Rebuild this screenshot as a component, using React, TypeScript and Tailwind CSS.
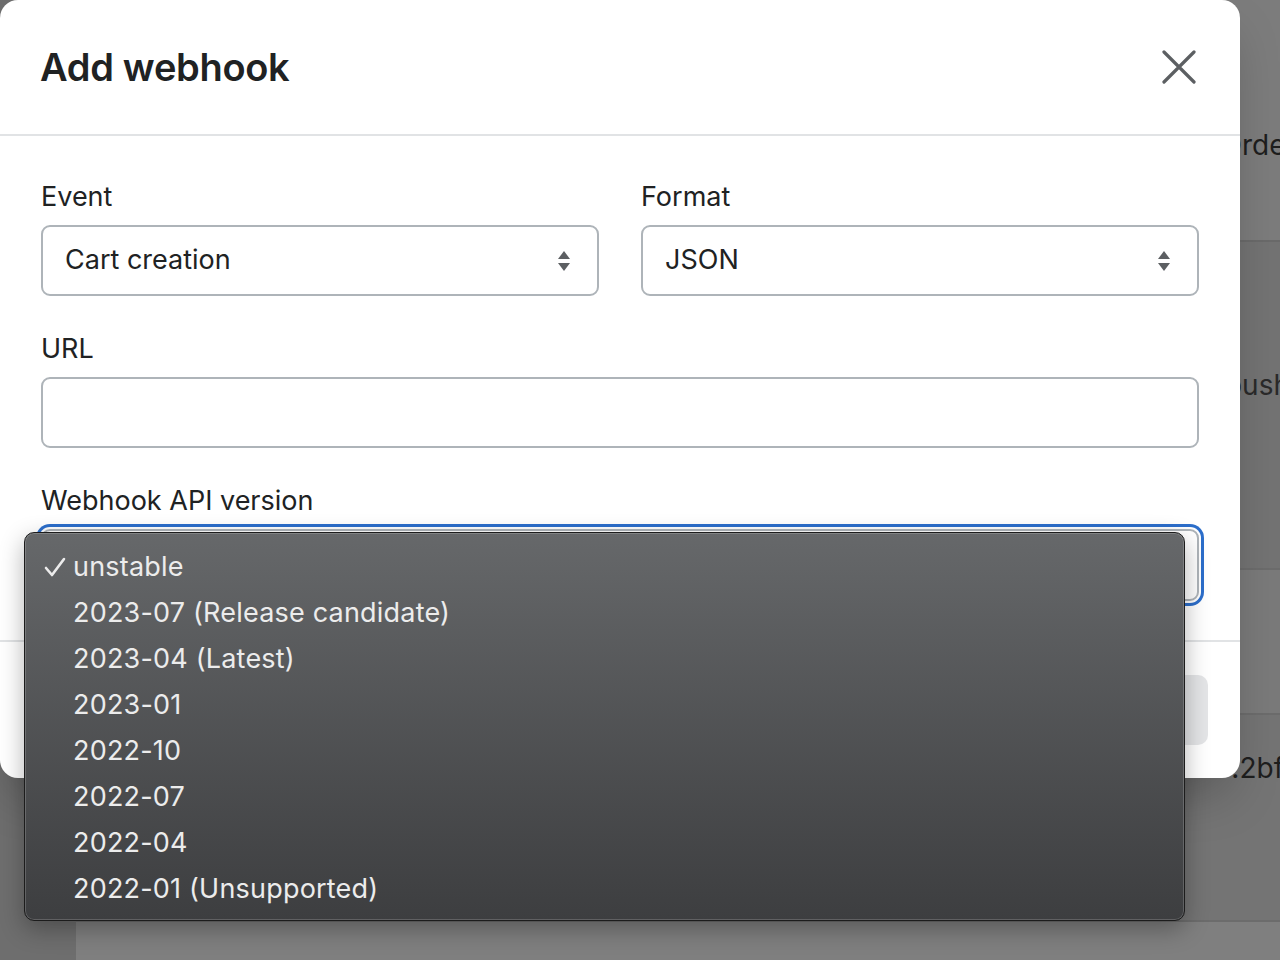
const versions = [
  'unstable',
  '2023-07 (Release candidate)',
  '2023-04 (Latest)',
  '2023-01',
  '2022-10',
  '2022-07',
  '2022-04',
  '2022-01 (Unsupported)',
];

function SelectArrows() {
  return (
    <svg width="14" height="22" viewBox="0 0 14 22" fill="#5c5f62">
      <path d="M7 1 L13 9 H1 Z" />
      <path d="M7 21 L13 13 H1 Z" />
    </svg>
  );
}

function Field({ label, value, arrows, focused }: { label: string; value?: string; arrows?: boolean; focused?: boolean }) {
  return (
    <div className="flex flex-col">
      <label className="text-[27px] leading-[36px] text-[#202223]">{label}</label>
      <div
        className={`flex items-center justify-between rounded-[9px] border-2 border-[#aeb4b9] bg-white pl-[22px] pr-[26px] ${
          focused ? 'mt-[10px] h-[72px] ring-[3px] ring-[#2c6ecb] ring-offset-2' : 'mt-[10px] h-[71px]'
        }`}
      >
        <span className="text-[27px] text-[#202223]">{value}</span>
        {arrows && <SelectArrows />}
      </div>
    </div>
  );
}

export default function App() {
  return (
    <div className="relative h-[960px] w-[1280px] overflow-hidden bg-[#787878]" style={{ fontFamily: 'Inter, "Noto Sans", sans-serif' }}>
      {/* page underneath the overlay */}
      <div className="flex h-full">
        <div className="w-[76px] bg-[#6e6e6e]"></div>
        <div className="flex flex-1 flex-col">
          <div className="flex h-[242px] items-start justify-end border-b-2 border-[#6a6a6a] bg-[#7c7c7c] pt-[124px]">
            <span className="-mr-[16px] text-[28px] text-[#1e1e1e]">Order</span>
          </div>
          <div className="flex h-[326px] items-start justify-end bg-[#737373] pt-[122px]">
            <span className="-mr-[10px] text-[28px] text-[#2a2a2a]">push</span>
          </div>
          <div className="h-[147px] border-y-2 border-[#6c6c6c] bg-[#7a7a7a]"></div>
          <div className="flex h-[205px] items-start justify-end bg-[#747474] pt-[32px]">
            <span className="-mr-[4px] text-[28px] text-[#1e1e1e]">.2bf</span>
          </div>
          <div className="flex-1 border-t-2 border-[#6c6c6c] bg-[#7f7f7f]"></div>
        </div>
      </div>

      {/* modal */}
      <div className="absolute left-0 top-0 flex h-[778px] w-[1240px] flex-col rounded-[18px] bg-white shadow-2xl">
        <div className="flex h-[136px] items-center justify-between border-b-2 border-[#e1e3e5] pl-[40px] pr-[44px]">
          <h1 className="text-[38px] font-semibold tracking-[-0.3px] text-[#202223]">Add webhook</h1>
          <svg width="34" height="34" viewBox="0 0 34 34" stroke="#5c5f62" strokeWidth="3.2" strokeLinecap="round">
            <path d="M2 2 L32 32 M32 2 L2 32" />
          </svg>
        </div>

        <div className="flex flex-col gap-[35px] px-[41px] pb-[39px] pt-[43px]">
          <div className="grid grid-cols-2 gap-[42px]">
            <Field label="Event" value="Cart creation" arrows />
            <Field label="Format" value="JSON" arrows />
          </div>
          <Field label="URL" />
          <Field label="Webhook API version" focused />
        </div>

        <div className="flex flex-1 items-start justify-end border-t-2 border-[#e1e3e5] pr-[32px] pt-[33px]">
          <div className="h-[70px] w-[120px] rounded-[10px] bg-[#e4e5e7]"></div>
        </div>
      </div>

      {/* native select menu */}
      <div className="absolute left-[24px] top-[532px] w-[1161px] rounded-[10px] border border-[#1c1c1c] bg-gradient-to-b from-[#66686a] to-[#3d3e40] pb-[8px] pt-[11px] shadow-[inset_0_0_0_1px_rgba(255,255,255,0.18),0_8px_24px_rgba(0,0,0,0.3)]">
        {versions.map((v, i) => (
          <div key={v} className="flex h-[46px] items-center">
            <div className="flex w-[48px] justify-end pr-[7px]">
              {i === 0 && (
                <svg width="22" height="20" viewBox="0 0 22 20" fill="none" stroke="#ececec" strokeWidth="2.6" strokeLinecap="round" strokeLinejoin="round">
                  <path d="M2 11 L8 18 L20 2" />
                </svg>
              )}
            </div>
            <span className="text-[27px] tracking-[0.2px] text-[#ececec]">{v}</span>
          </div>
        ))}
      </div>
    </div>
  );
}
